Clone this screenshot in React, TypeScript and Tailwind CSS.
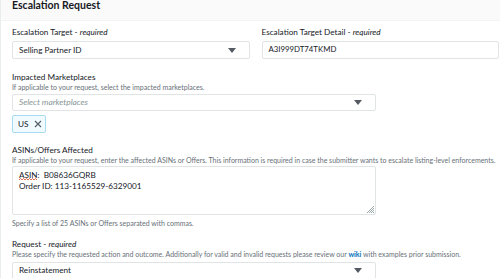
const Caret = () => (
  <svg width="8" height="5" viewBox="0 0 8 5" className="shrink-0">
    <path d="M0 0 H8 L4 5 Z" fill="#545b64" />
  </svg>
);

const Label = ({ text, required }: { text: string; required?: boolean }) => (
  <div className="text-[8.2px] leading-[11px] text-[#16191f]">
    {text}
    {required && (
      <>
        {" - "}
        <i>required</i>
      </>
    )}
  </div>
);

const Help = ({ children }: any) => (
  <div className="text-[7px] leading-[9px] text-[#687078] whitespace-nowrap">{children}</div>
);

const Select = ({ value, placeholder, w, h }: any) => (
  <div
    className={`${w} ${h} flex items-center justify-between pl-[6px] pr-[13px] border border-[#e1e4e4] rounded-[2px] bg-white`}
  >
    {value ? (
      <span className="text-[8.2px] text-[#16191f]">{value}</span>
    ) : (
      <span className="text-[8.4px] italic text-[#879596]">{placeholder}</span>
    )}
    <Caret />
  </div>
);

export default function App() {
  return (
    <div className="w-[500px] h-[278px] overflow-hidden bg-white border-l border-[#eaeded] font-['Lato','Open_Sans',sans-serif]">
      <div className="h-[21px] bg-[#fafafa] border-b border-[#f2f3f3] pl-[11px]">
        <h2 className="text-[10.5px] font-bold leading-[11px] text-[#16191f]">Escalation Request</h2>
      </div>

      <div className="pl-[11px] pr-[1px] pt-[6px]">
        <div className="grid grid-cols-2 gap-3">
          <div className="flex flex-col gap-[3px]">
            <Label text="Escalation Target" required />
            <Select value="Selling Partner ID" w="w-full" h="h-[18px]" />
          </div>
          <div className="flex flex-col gap-[3px]">
            <Label text="Escalation Target Detail" required />
            <div className="h-[18px] flex items-center pl-[6px] border border-[#e1e4e4] rounded-[2px]">
              <span className="text-[7.8px] text-[#16191f]">A3I999DT74TKMD</span>
            </div>
          </div>
        </div>

        <div className="mt-[13px] flex flex-col">
          <Label text="Impacted Marketplaces" />
          <Help>If applicable to your request, select the impacted marketplaces.</Help>
          <div className="mt-[2px]">
            <Select placeholder="Select marketplaces" w="w-[364px]" h="h-[17px]" />
          </div>
          <div className="mt-[4px] w-[34px] h-[18px] flex items-center gap-[6px] pl-[5px] border border-[#a6dcef] bg-[#f1faff] rounded-[2px]">
            <span className="text-[8.2px] text-[#16191f]">US</span>
            <svg width="8" height="8" viewBox="0 0 8 8">
              <path d="M1 1 L7 7 M7 1 L1 7" stroke="#545b64" strokeWidth="1.1" />
            </svg>
          </div>
        </div>

        <div className="mt-[12px] flex flex-col">
          <Label text="ASINs/Offers Affected" />
          <Help>
            If applicable to your request, enter the affected ASINs or Offers. This information is
            required in case the submitter wants to escalate listing-level enforcements.
          </Help>
          <div className="relative mt-[1px] w-[364px] h-[49px] border border-[#e1e4e4] rounded-[2px] pl-[6px] pt-[3px] text-[8.2px] leading-[11px] text-[#16191f]">
            <div className="whitespace-pre">
              <span className="relative">
                ASIN
                <svg width="18" height="3" viewBox="0 0 18 3" className="absolute left-0 bottom-[-1px]">
                  <path d="M0 2 L1.5 0.5 L3 2 L4.5 0.5 L6 2 L7.5 0.5 L9 2 L10.5 0.5 L12 2 L13.5 0.5 L15 2 L16.5 0.5 L18 2" stroke="#d13212" strokeWidth="0.7" fill="none" />
                </svg>
              </span>
              {":  B08636GQRB"}
            </div>
            <div>Order ID: 113-1165529-6329001</div>
            <svg width="8" height="8" viewBox="0 0 8 8" className="absolute right-[1px] bottom-[1px]">
              <path d="M8 1 L1 8 M8 3 L3 8 M8 5 L5 8 M8 7 L7 8" stroke="#879596" strokeWidth="0.8" />
            </svg>
          </div>
          <div className="mt-[4px]">
            <Help>Specify a list of 25 ASINs or Offers separated with commas.</Help>
          </div>
        </div>

        <div className="mt-[11px] flex flex-col">
          <Label text="Request" required />
          <Help>
            Please specify the requested action and outcome. Additionally for valid and invalid
            requests please review our <b className="text-[#0073bb]">wiki</b> with examples prior
            submission.
          </Help>
          <div className="mt-[3px]">
            <Select value="Reinstatement" w="w-[364px]" h="h-[17px]" />
          </div>
        </div>
      </div>
    </div>
  );
}
